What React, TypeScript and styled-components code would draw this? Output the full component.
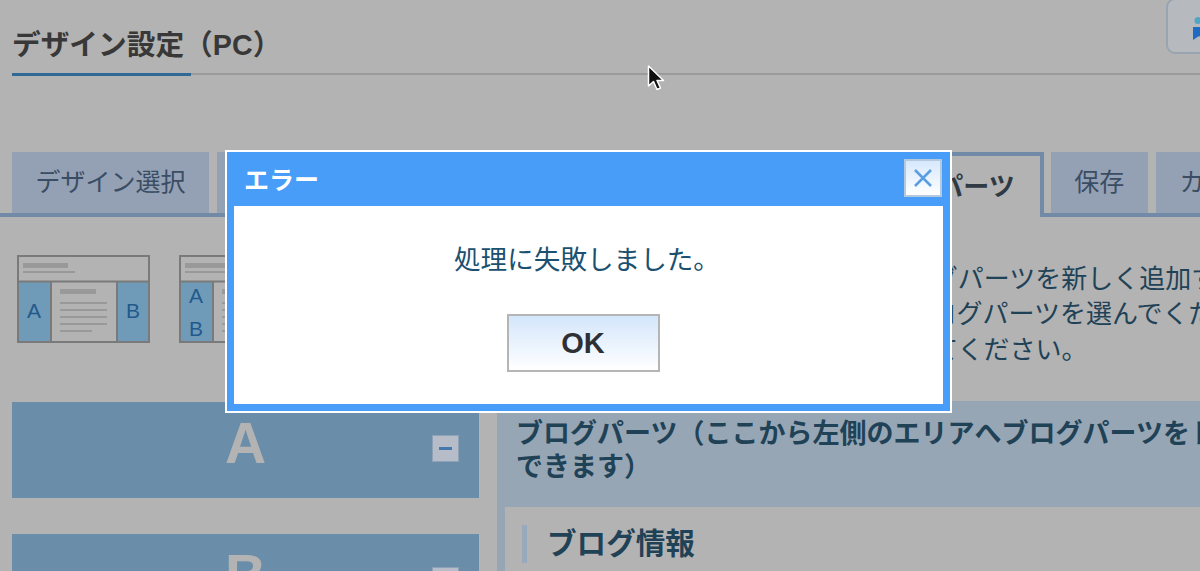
import React from "react";
import styled, { createGlobalStyle } from "styled-components";

const Global = createGlobalStyle`
  html, body { margin: 0; padding: 0; background: #b3b3b3; }
  * { box-sizing: border-box; }
`;

const JP = `"Liberation Sans", "Noto Sans CJK JP", sans-serif`;

const Page = styled.div`
  position: relative;
  width: 1200px;
  height: 571px;
  overflow: hidden;
  background: #b3b3b3;
  font-family: ${JP};
  color: #1f4257;
`;

const Header = styled.header`
  display: flex;
  justify-content: space-between;
  align-items: flex-start;
  height: 75px;
  margin-left: 12px;
  border-bottom: 2px solid #999a9b;
`;

const Title = styled.h1`
  position: relative;
  margin: 0;
  height: 75px;
  width: 179px;
  padding-top: 25px;
  font-size: 28.7px;
  line-height: 40px;
  font-weight: 700;
  white-space: nowrap;
  color: #383838;
  &::after {
    content: "";
    position: absolute;
    left: 0;
    right: 0;
    bottom: -1px;
    height: 3px;
    background: #2f6a95;
  }
`;

const HelpButton = styled.div`
  width: 60px;
  height: 56px;
  margin: -2px -26px 0 0;
  border: 2px solid #98a5b1;
  border-radius: 9px;
  background: #b6babe;
  padding: 17px 0 0 25px;
`;

const Tabs = styled.nav`
  display: flex;
  gap: 8px;
  height: 65px;
  margin-top: 77px;
  padding-left: 12px;
  border-bottom: 4px solid #708aa8;
  white-space: nowrap;
`;

const Tab = styled.div<{ $w: number; $active?: boolean }>`
  flex: none;
  width: ${(p) => p.$w}px;
  height: ${(p) => (p.$active ? "65px" : "61px")};
  display: flex;
  align-items: center;
  justify-content: center;
  padding-bottom: 5px;
  margin-right: ${(p) => (p.$active ? "-1px" : "0")};
  font-size: ${(p) => (p.$active ? "26px" : "25px")};
  font-weight: ${(p) => (p.$active ? 700 : 400)};
  color: ${(p) => (p.$active ? "#2f3a44" : "#3a4d63")};
  background: ${(p) => (p.$active ? "#b3b3b3" : "#94a1b5")};
  border: ${(p) => (p.$active ? "4px solid #708aa8" : "none")};
  border-bottom: none;
`;

const Columns = styled.main`
  display: flex;
  gap: 18px;
  margin-top: 38px;
  padding-left: 12px;
`;

const LeftCol = styled.section`
  flex: none;
  width: 467px;
`;

const Thumbs = styled.div`
  display: flex;
  gap: 29px;
  padding-left: 5px;
  height: 88px;
  margin-bottom: 59px;
`;

const AreaPanel = styled.div`
  position: relative;
  height: 96px;
  margin-bottom: 36px;
  background: #6a8ea9;
  text-align: center;
  color: #b3b3b3;
  font-size: 57px;
  font-weight: 700;
  line-height: 82px;
`;

const MinusButton = styled.span`
  position: absolute;
  right: 20px;
  top: 33px;
  width: 27px;
  height: 27px;
  display: flex;
  align-items: center;
  justify-content: center;
  background: #b6bdc8;
  border: 1px solid #8ea1b6;
  &::before {
    content: "";
    width: 13px;
    height: 3px;
    background: #4579ad;
  }
`;

const RightCol = styled.section`
  flex: 1;
  min-width: 0;
  overflow: hidden;
`;

const Intro = styled.p`
  margin: 7px 0 33px 20px;
  font-size: 26px;
  line-height: 35.3px;
  white-space: nowrap;
  & > span { display: block; }
`;

const PartsPanel = styled.div`
  padding: 17px 0 0 8px;
  background: #97a6b4;
  height: 210px;
`;

const PartsTitle = styled.h2`
  margin: 0;
  padding: 0 0 23px 11px;
  font-size: 27px;
  line-height: 33px;
  font-weight: 700;
  white-space: nowrap;
`;

const PartsBox = styled.div`
  background: #b3b3b3;
  padding: 18px 0 0 17px;
  height: 100px;
`;

const PartsHeading = styled.h3`
  margin: 0;
  height: 38px;
  padding-left: 20px;
  border-left: 5px solid #98a9bc;
  font-size: 29.6px;
  line-height: 38px;
  font-weight: 700;
  white-space: nowrap;
`;

const Dialog = styled.div`
  position: absolute;
  left: 225px;
  top: 150px;
  width: 727px;
  height: 263px;
  display: flex;
  flex-direction: column;
  padding: 0 7px 7px;
  background: #479df8;
  border: 2px solid #fff;
`;

const DialogBar = styled.div`
  flex: none;
  height: 54px;
  display: flex;
  align-items: center;
  justify-content: space-between;
  padding: 0 1px 3px 10px;
  color: #fff;
  font-size: 25px;
  font-weight: 700;
`;

const CloseButton = styled.button`
  width: 38px;
  height: 38px;
  padding: 0;
  display: flex;
  align-items: center;
  justify-content: center;
  background: linear-gradient(#d6e8fc, #ffffff);
  border: 2px solid #b4c8de;
`;

const DialogBody = styled.div`
  flex: 1;
  display: flex;
  flex-direction: column;
  align-items: center;
  background: #fff;
  padding: 34px 9px 0 0;
`;

const Message = styled.p`
  margin: 0 0 34px 6px;
  font-size: 26.6px;
  line-height: 40px;
  color: #1b5070;
`;

const OkButton = styled.button`
  width: 153px;
  height: 58px;
  margin-left: -2px;
  padding: 0;
  background: linear-gradient(#d3e6fb, #ffffff);
  border: 2px solid #b5b5b5;
  font-family: ${JP};
  font-size: 29px;
  font-weight: 700;
  color: #2e3036;
`;

const Cursor = styled.svg`
  position: absolute;
  left: 646px;
  top: 64px;
`;

const LayoutThumb = ({ stacked }: { stacked?: boolean }) => (
  <svg width="133" height="88" viewBox="0 0 133 88" style={{ flex: "none" }}>
    <rect x="1" y="1" width="131" height="86" fill="#b3b3b3" stroke="#7a7a7a" strokeWidth="2" />
    <rect x="6" y="8" width="45" height="5" fill="#999" />
    <rect x="6" y="16" width="52" height="2" fill="#999" />
    <rect x="2" y="27" width="32" height="59" fill="#6f9ab8" />
    <rect x="100" y="27" width="31" height="59" fill="#6f9ab8" />
    <path d="M1 26.500H132M34 26V87M100 26V87" stroke="#7a7a7a" strokeWidth="2" fill="none" />
    <rect x="43" y="34" width="36" height="5" fill="#999" />
    {[47, 54, 61, 68].map((y) => (
      <rect key={y} x="43" y={y} width="47" height="2" fill="#999" />
    ))}
    <rect x="43" y="75" width="32" height="2" fill="#999" />
    {stacked ? (
      <g fontFamily="Liberation Sans, sans-serif" fontSize="21" fill="#235a8c" textAnchor="middle">
        <text x="17" y="48">A</text>
        <text x="17" y="81">B</text>
      </g>
    ) : (
      <g fontFamily="Liberation Sans, sans-serif" fontSize="21" fill="#235a8c" textAnchor="middle">
        <text x="17" y="63">A</text>
        <text x="116" y="63">B</text>
      </g>
    )}
  </svg>
);

export default function App() {
  return (
    <Page>
      <Global />
      <Header>
        <Title>デザイン設定（PC）</Title>
        <HelpButton>
          <svg width="12" height="24" viewBox="0 0 12 24">
            <circle cx="5" cy="3.500" r="3.500" fill="#4fa6c4" />
            <path d="M0 10H12V23L6 19L0 23Z" fill="#1c6cc4" />
          </svg>
        </HelpButton>
      </Header>
      <Tabs>
        <Tab $w={197}>デザイン選択</Tab>
        <Tab $w={297}>テンプレート</Tab>
        <Tab $w={300}>レイアウト</Tab>
        <Tab $w={214} $active>ブログパーツ</Tab>
        <Tab $w={96.5}>保存</Tab>
        <Tab $w={148}>カスタム</Tab>
      </Tabs>
      <Columns>
        <LeftCol>
          <Thumbs>
            <LayoutThumb />
            <LayoutThumb stacked />
          </Thumbs>
          <AreaPanel>
            A
            <MinusButton />
          </AreaPanel>
          <AreaPanel>
            B
            <MinusButton />
          </AreaPanel>
        </LeftCol>
        <RightCol>
          <Intro>
            <span>サイドバーの各エリアなどへ、ブログパーツを新しく追加する場合は</span>
            <span>追加できます。下のリストから、ブログパーツを選んでください。</span>
            <span>左側エリアへドラッグ＆ドロップしてください。</span>
          </Intro>
          <PartsPanel>
            <PartsTitle>
              ブログパーツ（ここから左側のエリアへブログパーツをドラッグ
              <br />
              できます）
            </PartsTitle>
            <PartsBox>
              <PartsHeading>ブログ情報</PartsHeading>
            </PartsBox>
          </PartsPanel>
        </RightCol>
      </Columns>
      <Cursor width="22" height="30" viewBox="0 0 22 30">
        <path
          d="M2.500 2V22L7.500 17.500L11 25.500L14.500 24L11 16.500H17.500Z"
          fill="#111"
          stroke="#fff"
          strokeWidth="1.500"
          strokeLinejoin="round"
        />
      </Cursor>
      <Dialog>
        <DialogBar>
          エラー
          <CloseButton aria-label="閉じる">
            <svg width="22" height="22" viewBox="0 0 22 22">
              <path d="M3 3L19 19M19 3L3 19" stroke="#5a9de0" strokeWidth="2.500" />
            </svg>
          </CloseButton>
        </DialogBar>
        <DialogBody>
          <Message>処理に失敗しました。</Message>
          <OkButton>OK</OkButton>
        </DialogBody>
      </Dialog>
    </Page>
  );
}
